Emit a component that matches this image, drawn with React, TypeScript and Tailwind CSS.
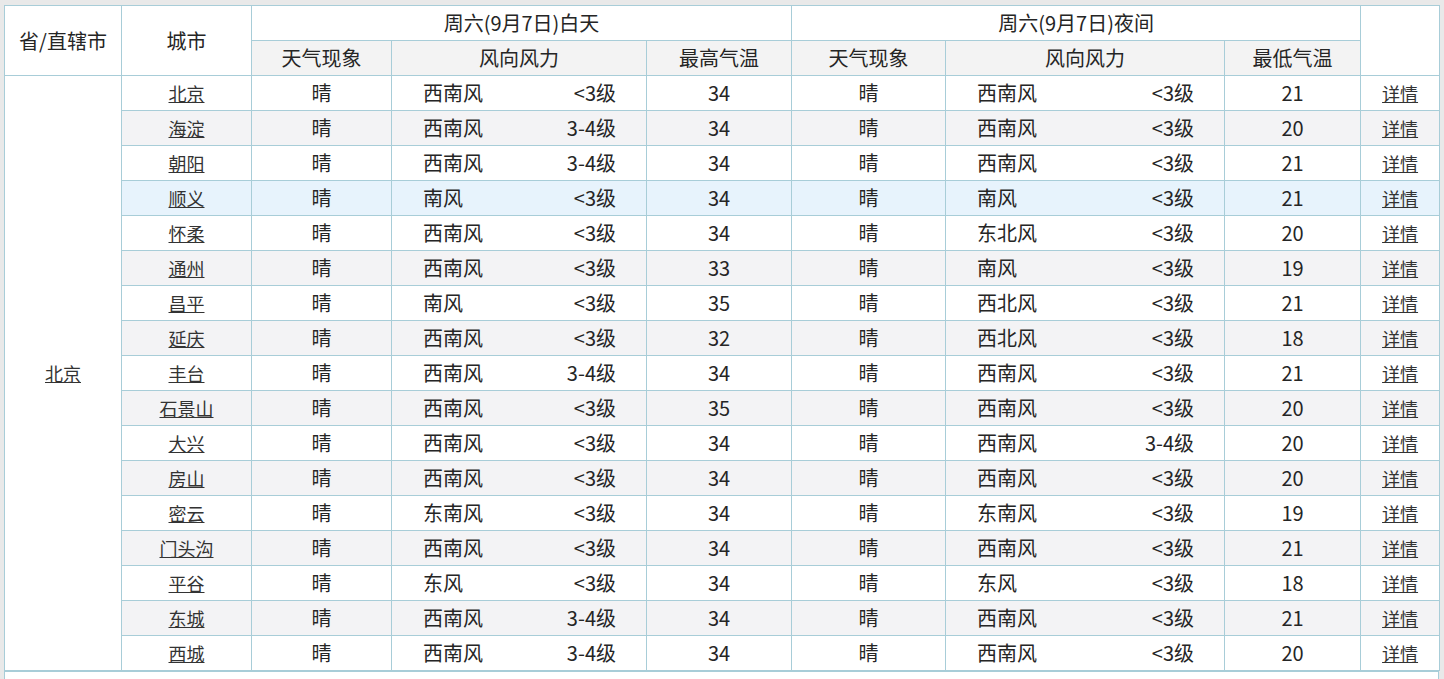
import React from "react";

type Row = [string, string, string, string, string, string, string, string, string];

const rows: Row[] = [
  ["北京", "晴", "西南风", "<3级", "34", "晴", "西南风", "<3级", "21"],
  ["海淀", "晴", "西南风", "3-4级", "34", "晴", "西南风", "<3级", "20"],
  ["朝阳", "晴", "西南风", "3-4级", "34", "晴", "西南风", "<3级", "21"],
  ["顺义", "晴", "南风", "<3级", "34", "晴", "南风", "<3级", "21"],
  ["怀柔", "晴", "西南风", "<3级", "34", "晴", "东北风", "<3级", "20"],
  ["通州", "晴", "西南风", "<3级", "33", "晴", "南风", "<3级", "19"],
  ["昌平", "晴", "南风", "<3级", "35", "晴", "西北风", "<3级", "21"],
  ["延庆", "晴", "西南风", "<3级", "32", "晴", "西北风", "<3级", "18"],
  ["丰台", "晴", "西南风", "3-4级", "34", "晴", "西南风", "<3级", "21"],
  ["石景山", "晴", "西南风", "<3级", "35", "晴", "西南风", "<3级", "20"],
  ["大兴", "晴", "西南风", "<3级", "34", "晴", "西南风", "3-4级", "20"],
  ["房山", "晴", "西南风", "<3级", "34", "晴", "西南风", "<3级", "20"],
  ["密云", "晴", "东南风", "<3级", "34", "晴", "东南风", "<3级", "19"],
  ["门头沟", "晴", "西南风", "<3级", "34", "晴", "西南风", "<3级", "21"],
  ["平谷", "晴", "东风", "<3级", "34", "晴", "东风", "<3级", "18"],
  ["东城", "晴", "西南风", "3-4级", "34", "晴", "西南风", "<3级", "21"],
  ["西城", "晴", "西南风", "3-4级", "34", "晴", "西南风", "<3级", "20"],
];

const td = "border border-[#a8cdd8] p-0 h-[35px] text-center align-middle";
const link = "underline underline-offset-[1px] decoration-1 text-[#333333]";

function Wind({ dir, level }: { dir: string; level: string }) {
  return (
    <div className="flex items-center justify-between pl-[31px] pr-[30px]">
      <span>{dir}</span>
      <span>{level}</span>
    </div>
  );
}

export default function App() {
  return (
    <div
      className="min-h-screen bg-[#e9e9e9] pl-[4px] pt-[5px] text-[#252525]"
      style={{ fontFamily: '"Microsoft YaHei", "Noto Sans CJK SC", "Noto Sans", sans-serif' }}
    >
      <table className="w-[1435px] table-fixed border-collapse bg-white text-[20px] leading-[26px]">
        <colgroup>
          <col className="w-[117px]" />
          <col className="w-[130px]" />
          <col className="w-[140px]" />
          <col className="w-[255px]" />
          <col className="w-[145px]" />
          <col className="w-[154px]" />
          <col className="w-[279px]" />
          <col className="w-[136px]" />
          <col className="w-[79px]" />
        </colgroup>
        <thead>
          <tr>
            <th rowSpan={2} className={td + " font-normal bg-white"}>省/直辖市</th>
            <th rowSpan={2} className={td + " font-normal bg-white"}>城市</th>
            <th colSpan={3} className={td + " font-normal bg-white"}>周六(9月7日)白天</th>
            <th colSpan={3} className={td + " font-normal bg-white"}>周六(9月7日)夜间</th>
            <th rowSpan={2} className={td + " font-normal bg-white"}></th>
          </tr>
          <tr className="bg-[#f3f3f3]">
            <th className={td + " font-normal"}>天气现象</th>
            <th className={td + " font-normal"}>风向风力</th>
            <th className={td + " font-normal"}>最高气温</th>
            <th className={td + " font-normal"}>天气现象</th>
            <th className={td + " font-normal"}>风向风力</th>
            <th className={td + " font-normal"}>最低气温</th>
          </tr>
        </thead>
        <tbody>
          {rows.map((r, i) => {
            const bg = i === 3 ? "bg-[#e7f3fc]" : i % 2 === 1 ? "bg-[#f3f3f5]" : "bg-white";
            return (
              <tr key={r[0]} className={bg}>
                {i === 0 && (
                  <td rowSpan={rows.length} className={td + " bg-white text-[18px]"}>
                    <a className={link}>北京</a>
                  </td>
                )}
                <td className={td + " text-[18px]"}>
                  <a className={link}>{r[0]}</a>
                </td>
                <td className={td}>{r[1]}</td>
                <td className={td}>
                  <Wind dir={r[2]} level={r[3]} />
                </td>
                <td className={td}>{r[4]}</td>
                <td className={td}>{r[5]}</td>
                <td className={td}>
                  <Wind dir={r[6]} level={r[7]} />
                </td>
                <td className={td}>{r[8]}</td>
                <td className={td + " text-[18px]"}>
                  <a className={link}>详情</a>
                </td>
              </tr>
            );
          })}
        </tbody>
      </table>
      <div className="h-[40px] w-[1435px] border border-[#a8cdd8] bg-white"></div>
    </div>
  );
}
